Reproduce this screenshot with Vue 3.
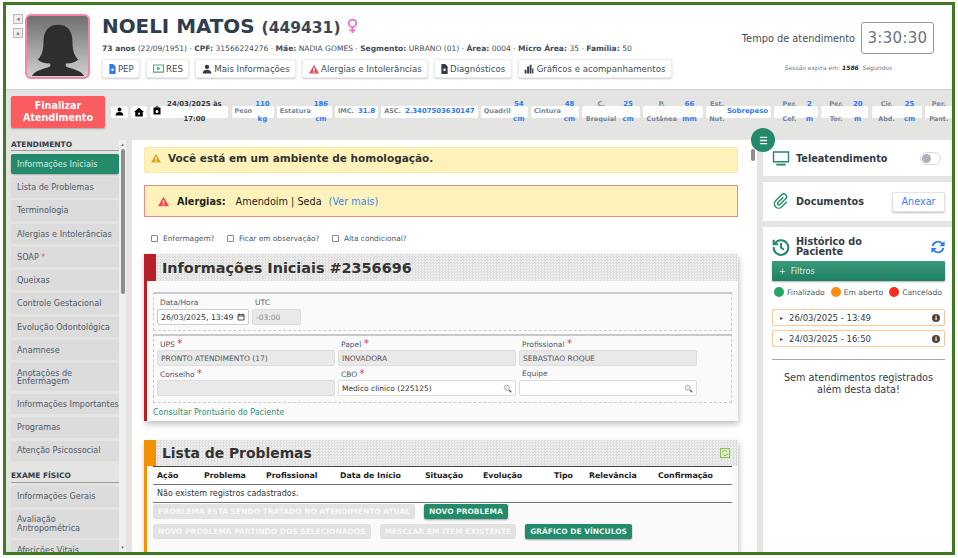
<script setup>
const acoes = [
  { nome: 'PEP', icone: 'arquivo', cor: '#2f7bf0' },
  { nome: 'RES', icone: 'res', cor: '#3fae8c' },
  { nome: 'Mais Informações', icone: 'pessoa', cor: '#333c48' },
  { nome: 'Alergias e Intolerâncias', icone: 'alerta', cor: '#ef4b55' },
  { nome: 'Diagnósticos', icone: 'arquivo', cor: '#333c48' },
  { nome: 'Gráficos e acompanhamentos', icone: 'barras', cor: '#333c48' },
]

const medidas = [
  { label: 'Peso', valor: '110 kg' },
  { label: 'Estatura', valor: '186 cm' },
  { label: 'IMC.', valor: '31.8' },
  { label: 'ASC.', valor: '2.3407503630147' },
  { label: 'Quadril', valor: '54 cm' },
  { label: 'Cintura', valor: '48 cm' },
  { label: 'C. Braquial', valor: '25 cm' },
  { label: 'P. Cutânea', valor: '66 mm' },
  { label: 'Est. Nut.', valor: 'Sobrepeso' },
  { label: 'Per. Cef.', valor: '2 m' },
  { label: 'Per. Tor.', valor: '20 m' },
  { label: 'Cir. Abd.', valor: '25 cm' },
  { label: 'Per. Pant.', valor: '' },
]

const menuAtendimento = [
  { nome: 'Informações Iniciais', ativo: true },
  { nome: 'Lista de Problemas' },
  { nome: 'Terminologia' },
  { nome: 'Alergias e Intolerâncias' },
  { nome: 'SOAP', obrigatorio: true },
  { nome: 'Queixas' },
  { nome: 'Controle Gestacional' },
  { nome: 'Evolução Odontológica' },
  { nome: 'Anamnese' },
  { nome: 'Anotações de Enfermagem', quebra: true },
  { nome: 'Informações Importantes' },
  { nome: 'Programas' },
  { nome: 'Atenção Psicossocial' },
]

const menuExame = [
  { nome: 'Informações Gerais' },
  { nome: 'Avaliação Antropométrica', quebra: true },
  { nome: 'Aferições Vitais' },
]

const colunas = ['Ação', 'Problema', 'Profissional', 'Data de Início', 'Situação', 'Evolução', 'Tipo', 'Relevância', 'Confirmação']

const historico = ['26/03/2025 - 13:49', '24/03/2025 - 16:50']
</script>

<template>
  <div class="moldura">
    <header class="topo">
      <div class="setas">
        <span class="seta">◂</span>
        <span class="seta">▴</span>
      </div>
      <div class="foto">
        <svg viewBox="0 0 62 62" width="60" height="60">
          <path fill="#2e2e2e" d="M31 8c-11 0-15 8-15 18 0 9-2 14-6 18 3 3 7 4 13 4v3c-5 3-15 3-19 10h54c-4-7-14-7-19-10v-3c6 0 10-1 13-4-4-4-6-9-6-18 0-10-4-18-15-18z" />
        </svg>
      </div>
      <div class="paciente">
        <h1 class="nome">
          <span>NOELI MATOS</span><small>(449431)</small>
          <svg class="sexo" viewBox="0 0 12 18" width="11" height="16">
            <circle cx="6" cy="6" r="4.2" fill="none" stroke="#f06fc0" stroke-width="2" />
            <path d="M6 10v7M2.5 14h7" stroke="#f06fc0" stroke-width="2" />
          </svg>
        </h1>
        <p class="dados">
          <b>73 anos</b> (22/09/1951) · <b>CPF:</b> 31566224276 · <b>Mãe:</b> NADIA GOMES · <b>Segmento:</b> URBANO (01) · <b>Área:</b> 0004 · <b>Micro Área:</b> 35 · <b>Família:</b> 50
        </p>
        <div class="acoes">
          <button v-for="a in acoes" :key="a.nome" class="acao">
            <svg v-if="a.icone === 'arquivo'" viewBox="3 0 10 16" width="7" height="10" :fill="a.cor">
              <path d="M3 0h6l4 4v12H3zM8 7a2 2 0 100 4 2 2 0 000-4z" />
            </svg>
            <svg v-else viewBox="0 0 16 16" :width="a.icone === 'res' ? 11 : 10" :height="a.icone === 'res' ? 11 : 10" :fill="a.cor">
              <path v-if="a.icone === 'res'" fill-rule="evenodd" d="M0 2h16v12H0zM1.500 3.500v9h13v-9zM6 5l5 3-5 3z" />
              <path v-else-if="a.icone === 'pessoa'" d="M8 1a3.500 3.500 0 110 7 3.500 3.500 0 010-7zM1 15c0-4 3-6 7-6s7 2 7 6z" />
              <path v-else-if="a.icone === 'alerta'" fill-rule="evenodd" d="M8 1l8 14H0zM7 6v5h2V6zM7 12v2h2v-2z" />
              <path v-else d="M1 9h3v6H1zM5 4h3v11H5zM9 1h3v14H9zM13 7h2v8h-2z" />
            </svg>
            {{ a.nome }}
          </button>
        </div>
      </div>
      <div class="tempo">
        <div class="tempo-linha">
          <span class="tempo-label">Tempo de atendimento</span>
          <span class="relogio">3:30:30</span>
        </div>
        <p class="sessao">Sessão expira em: <b>1586</b> &nbsp;Segundos</p>
      </div>
    </header>

    <section class="barra">
      <button class="finalizar">Finalizar Atendimento</button>
      <div class="chips">
        <span class="chip chip-icone">
          <svg viewBox="0 0 16 16" width="9" height="9"><path d="M8 1a3.500 3.500 0 110 7 3.500 3.500 0 010-7zM1 15c0-4 3-6 7-6s7 2 7 6z" /></svg>
        </span>
        <span class="chip chip-icone">
          <svg viewBox="0 0 16 16" width="10" height="10"><path fill-rule="evenodd" d="M8 1l8 7h-2v7H2V8H0zM6.500 9v3h3V9z" /></svg>
        </span>
        <span class="chip chip-data">
          <svg viewBox="0 0 16 16" width="8" height="9"><path fill-rule="evenodd" d="M1 2h4a3 3 0 016 0h4v14H1zM8 1.200a1 1 0 100 2 1 1 0 000-2zM8 7a3 3 0 100 6 3 3 0 000-6z" /></svg>
          <b>24/03/2025 às 17:00</b>
        </span>
        <span v-for="m in medidas" :key="m.label" class="chip">
          <span class="chip-label">{{ m.label }}</span>
          <span class="chip-valor">{{ m.valor }}</span>
        </span>
      </div>
    </section>

    <div class="corpo">
      <aside class="lateral">
        <nav class="menu">
          <h4 class="menu-titulo">ATENDIMENTO</h4>
          <a v-for="i in menuAtendimento" :key="i.nome" class="menu-item" :class="{ ativo: i.ativo, quebra: i.quebra }">
            <span>{{ i.nome }} <em v-if="i.obrigatorio">*</em></span>
          </a>
          <h4 class="menu-titulo exame">EXAME FÍSICO</h4>
          <a v-for="i in menuExame" :key="i.nome" class="menu-item" :class="{ quebra: i.quebra }">
            <span>{{ i.nome }}</span>
          </a>
        </nav>
        <div class="rolagem">
          <span class="rolagem-seta">▴</span>
          <span class="rolagem-guia"></span>
          <span class="rolagem-seta fim">▾</span>
        </div>
      </aside>

      <main class="principal">
        <div class="conteudo">
          <div class="aviso">
            <svg viewBox="0 0 16 16" width="10" height="10" fill="#d9a520"><path fill-rule="evenodd" d="M8 1l8 14H0zM7 6v5h2V6zM7 12v2h2v-2z" /></svg>
            <strong>Você está em um ambiente de homologação.</strong>
          </div>
          <div class="aviso alergia">
            <svg viewBox="0 0 16 16" width="11" height="11" fill="#ef4b55"><path fill-rule="evenodd" d="M8 1l8 14H0zM7 6v5h2V6zM7 12v2h2v-2z" /></svg>
            <b>Alergias:</b>
            <span>Amendoim | Seda</span>
            <a>(Ver mais)</a>
          </div>
          <div class="checks">
            <label><i class="caixa"></i>Enfermagem?</label>
            <label><i class="caixa"></i>Ficar em observação?</label>
            <label><i class="caixa"></i>Alta condicional?</label>
          </div>

          <section class="cartao vermelho">
            <div class="cartao-topo"><h2>Informações Iniciais #2356696</h2></div>
            <div class="cartao-corpo">
              <div class="grupo linha-data">
                <div class="campo">
                  <label>Data/Hora</label>
                  <div class="entrada data">
                    26/03/2025, 13:49
                    <svg viewBox="0 0 12 12" width="8" height="8"><path fill="none" stroke="#222" stroke-width="1.200" d="M1.500 2.500h9v8h-9zM1.500 4.500h9M3.500 1v2M8.500 1v2" /></svg>
                  </div>
                </div>
                <div class="campo">
                  <label>UTC</label>
                  <div class="entrada off utc">-03:00</div>
                </div>
              </div>
              <div class="grupo grade">
                <div class="campo"><label>UPS <em>*</em></label><div class="entrada off">PRONTO ATENDIMENTO (17)</div></div>
                <div class="campo"><label>Papel <em>*</em></label><div class="entrada off">INOVADORA</div></div>
                <div class="campo"><label>Profissional <em>*</em></label><div class="entrada off">SEBASTIAO ROQUE</div></div>
                <div class="campo"><label>Conselho <em>*</em></label><div class="entrada off"></div></div>
                <div class="campo">
                  <label>CBO <em>*</em></label>
                  <div class="entrada busca">Medico clinico (225125)
                    <svg viewBox="0 0 12 12" width="9" height="9"><circle cx="5" cy="5" r="3.500" fill="#dfeaf0" stroke="#9aa5ab" /><path d="M8 8l3 3" stroke="#555" stroke-width="1.600" /></svg>
                  </div>
                </div>
                <div class="campo">
                  <label>Equipe</label>
                  <div class="entrada busca">
                    <svg viewBox="0 0 12 12" width="9" height="9"><circle cx="5" cy="5" r="3.500" fill="#dfeaf0" stroke="#9aa5ab" /><path d="M8 8l3 3" stroke="#555" stroke-width="1.600" /></svg>
                  </div>
                </div>
              </div>
              <a class="consultar">Consultar Prontuário do Paciente</a>
            </div>
          </section>

          <section class="cartao laranja">
            <div class="cartao-topo">
              <h2>Lista de Problemas</h2>
              <svg class="recarregar" viewBox="0 0 12 12" width="10" height="10">
                <rect x="0.500" y="0.500" width="11" height="11" fill="#dcefc0" stroke="#7fb84a" />
                <path d="M3 5a3 3 0 015-1M9 7a3 3 0 01-5 1" fill="none" stroke="#6aa83a" />
              </svg>
            </div>
            <div class="cartao-corpo sem-topo">
              <table class="tabela">
                <thead>
                  <tr><th v-for="c in colunas" :key="c">{{ c }}</th></tr>
                </thead>
                <tbody>
                  <tr><td :colspan="colunas.length">Não existem registros cadastrados.</td></tr>
                </tbody>
              </table>
              <div class="botoes">
                <button class="btn" disabled>PROBLEMA ESTÁ SENDO TRATADO NO ATENDIMENTO ATUAL</button>
                <button class="btn">NOVO PROBLEMA</button>
              </div>
              <div class="botoes">
                <button class="btn" disabled>NOVO PROBLEMA PARTINDO DOS SELECIONADOS</button>
                <button class="btn" disabled>MESCLAR EM ITEM EXISTENTE</button>
                <button class="btn">GRÁFICO DE VÍNCULOS</button>
              </div>
            </div>
          </section>
        </div>
        <div class="rolagem-principal"><span></span></div>
      </main>

      <aside class="direita">
        <button class="hamburguer" aria-label="menu">
          <svg viewBox="0 0 10 10" width="9" height="9"><path d="M1 1.500h8M1 5h8M1 8.500h8" stroke="#fff" stroke-width="1.600" /></svg>
        </button>
        <div class="painel linha">
          <svg viewBox="0 0 18 16" width="18" height="15" fill="none" stroke="#238a6b" stroke-width="1.500">
            <path d="M1 1h16v10.500H1z" /><path d="M4 14.500h10" stroke-width="2" />
          </svg>
          <b>Teleatendimento</b>
          <span class="chave"><i></i></span>
        </div>
        <div class="painel linha docs">
          <svg viewBox="0 0 19 19" width="18" height="18" fill="none" stroke="#238a6b" stroke-width="1.500">
            <g transform="rotate(45 9.500 9)">
              <path d="M8 4v8a1.500 1.500 0 003 0V3.500a3 3 0 00-6 0v9a4.500 4.500 0 009 0V5" />
            </g>
          </svg>
          <b>Documentos</b>
          <button class="anexar">Anexar</button>
        </div>
        <div class="painel historico">
          <div class="hist-topo">
            <svg viewBox="0 0 16 16" width="18" height="18" fill="none" stroke="#238a6b" stroke-width="1.800">
              <path d="M2.500 5A6.500 6.500 0 111.500 8" /><path d="M1.500 1.500V5.500h4" /><path d="M8 4.500V8.500l2.500 2" />
            </svg>
            <b>Histórico do Paciente</b>
            <svg viewBox="0 0 16 16" width="14" height="14" fill="none" stroke="#2f7bf0" stroke-width="2.200">
              <path d="M2 7a6 6 0 0110.500-3L14 5.500" /><path d="M14 9a6 6 0 01-10.500 3L2 10.500" />
              <path d="M15.500 1v6h-6zM.5 15V9h6z" stroke="none" fill="#2f7bf0" />
            </svg>
          </div>
          <button class="filtros">+ &nbsp;Filtros</button>
          <div class="legenda">
            <span><i class="verde"></i>Finalizado</span>
            <span><i class="ambar"></i>Em aberto</span>
            <span><i class="rubro"></i>Cancelado</span>
          </div>
          <div v-for="h in historico" :key="h" class="hist-item">
            <span class="hist-seta">▸</span>
            {{ h }}
            <span class="hist-info">i</span>
          </div>
          <hr class="regua" />
          <p class="vazio">Sem atendimentos registrados além desta data!</p>
        </div>
      </aside>
    </div>
  </div>
</template>

<style>
html, body {
  margin: 0;
  background: #fff;
}
</style>

<style scoped>
* {
  box-sizing: border-box;
}

.moldura {
  width: 952px;
  height: 553px;
  margin: 2px 0 0 3px;
  border: 3px solid #3f7a22;
  display: flex;
  flex-direction: column;
  overflow: hidden;
  background: #e4e4e2;
  font-family: "DejaVu Sans", Verdana, sans-serif;
  color: #333c48;
}

button {
  font-family: inherit;
}

/* topo */
.topo {
  height: 85px;
  flex: none;
  display: flex;
  background: #fff;
  border-bottom: 1px solid #cfd0d6;
  padding: 9px 0 0 7px;
}

.setas {
  display: flex;
  flex-direction: column;
  gap: 4px;
  width: 12px;
}

.seta {
  width: 10px;
  height: 10px;
  border: 1px solid #bbb;
  background: #eee;
  color: #888;
  font-size: 7px;
  line-height: 8px;
  text-align: center;
}

.foto {
  width: 65px;
  height: 65px;
  border: 2.500px solid #f783ac;
  border-radius: 6px;
  background: linear-gradient(#6f6f6f, #cfcfcf);
  overflow: hidden;
  display: flex;
  align-items: flex-end;
  justify-content: center;
}

.paciente {
  margin-left: 12px;
  width: 540px;
  flex: none;
}

.nome {
  margin: 0;
  font-size: 19.900px;
  line-height: 26px;
  font-weight: 700;
  color: #2f3d4e;
  white-space: nowrap;
}

.nome small {
  margin-left: 7px;
  font-size: 15.500px;
  color: #3c4654;
}

.sexo {
  margin-left: 7px;
  vertical-align: -1px;
}

.dados {
  margin: 2px 0 0;
  font-size: 7.550px;
  line-height: 11px;
  white-space: nowrap;
  color: #444d59;
}

.acoes {
  display: flex;
  gap: 6px;
  margin-top: 5px;
}

.acao {
  height: 19px;
  padding: 0 5.500px;
  background: #fff;
  border: 1px solid #ececec;
  border-radius: 2px;
  box-shadow: 0 1px 2px rgba(0, 0, 0, 0.2);
  font-size: 8.600px;
  color: #444d59;
  white-space: nowrap;
  display: flex;
  align-items: center;
  gap: 2.400px;
}

.tempo {
  margin-left: auto;
  width: 209px;
  padding: 8px 18px 0 0;
  flex: none;
}

.tempo-linha {
  display: flex;
  align-items: center;
  justify-content: flex-end;
  gap: 6px;
}

.tempo-label {
  font-size: 9.800px;
  color: #444d59;
  white-space: nowrap;
}

.relogio {
  width: 73px;
  height: 32px;
  flex: none;
  border: 1px solid #999;
  border-radius: 3px;
  font-size: 15px;
  letter-spacing: 0.3px;
  line-height: 30px;
  text-align: center;
  color: #6b7480;
}

.sessao {
  margin: 10px 0 0;
  text-align: center;
  font-size: 6px;
  font-style: italic;
  color: #6b7480;
  white-space: nowrap;
}

.sessao b {
  color: #222;
}

/* barra de medidas */
.barra {
  height: 50px;
  flex: none;
  display: flex;
  gap: 6px;
  padding: 6px 0 0 5px;
  overflow: hidden;
}

.finalizar {
  width: 94px;
  height: 32px;
  flex: none;
  border: none;
  border-radius: 2px;
  background: #fb5c5f;
  box-shadow: 0 1px 2px rgba(0, 0, 0, 0.3);
  color: #fff;
  font-size: 9.600px;
  font-weight: 700;
  line-height: 12px;
  padding: 0 4px;
}

.chips {
  display: grid;
  grid-template-columns: 17px 16px 78px 42px 55px 43px 96.500px 47px 48px 58px 59.500px 65px 44px 47px 50px 30px;
  gap: 3.200px;
  align-items: center;
  height: 31px;
  font-size: 6.900px;
  font-weight: 700;
}

.chip {
  height: 12px;
  background: #fff;
  border-radius: 2px;
  padding: 0 3px;
  display: flex;
  align-items: center;
  justify-content: space-between;
  gap: 2px;
  line-height: 15px;
  text-align: center;
}

.chip-icone {
  justify-content: center;
  padding: 0;
}

.chip-data b {
  flex: 1;
  color: #333c48;
}

.chip-data svg {
  flex: none;
  margin-bottom: 2px;
}

.chip-label {
  color: #7c8794;
  font-size: 6.500px;
}

.chip-valor {
  color: #2f7bf0;
}

/* corpo */
.corpo {
  flex: 1;
  min-height: 0;
  display: flex;
}

.lateral {
  width: 120px;
  flex: none;
  display: flex;
}

.menu {
  width: 113px;
  flex: none;
  padding-left: 5px;
  overflow: hidden;
}

.menu-titulo {
  margin: 0 0 3px;
  height: 11px;
  font-size: 7.500px;
  line-height: 9px;
  font-weight: 700;
  color: #333c48;
  border-bottom: 1px solid #9a9da3;
}

.menu-titulo.exame {
  margin: 9px 0 3.500px;
  height: 13px;
  line-height: 12px;
}

.menu-item {
  display: flex;
  align-items: center;
  min-height: 20.300px;
  margin-bottom: 2.950px;
  padding-left: 6px;
  background: #dcdcdc;
  border-radius: 2px;
  font-size: 8.100px;
  line-height: 8.500px;
  color: #4d5866;
  white-space: nowrap;
}

.menu-item.quebra {
  white-space: normal;
  min-height: 28px;
}

.menu-item.quebra span {
  max-width: 80px;
}

.menu-item em {
  color: #ee5a6a;
  font-style: normal;
}

.menu-item.ativo {
  background: #238a6b;
  color: #d9efe7;
  box-shadow: 0 1px 2px rgba(0, 0, 0, 0.25);
}

.rolagem {
  width: 7px;
  flex: none;
  display: flex;
  flex-direction: column;
  background: #efefef;
  color: #666;
  font-size: 5px;
  text-align: center;
}

.rolagem-seta {
  height: 9px;
  line-height: 9px;
}

.rolagem-seta.fim {
  margin-top: auto;
}

.rolagem-guia {
  height: 145px;
  width: 4px;
  margin-left: 1.500px;
  background: #8d8d8d;
  border-radius: 2px;
}

.principal {
  width: 625px;
  margin-left: 6px;
  flex: none;
  display: flex;
  background: #fff;
}

.conteudo {
  width: 619px;
  flex: none;
  padding: 7px 13px 0 12px;
  overflow: hidden;
}

.rolagem-principal {
  width: 6px;
  flex: none;
  padding: 9px 0 0 0;
}

.rolagem-principal span {
  display: block;
  width: 4px;
  height: 12px;
  background: #8d8d8d;
  border-radius: 2px;
}

.aviso {
  height: 26px;
  display: flex;
  align-items: center;
  gap: 7px;
  padding: 0 0 4px 6px;
  background: #fff3bb;
  border: 1px solid #f6eaa0;
  border-radius: 2px;
  font-size: 10.500px;
  color: #333;
}

.aviso.alergia {
  height: 32px;
  margin-top: 12px;
  padding: 0 0 0 13px;
  gap: 8px;
  border: 1px solid #f08a85;
  border-radius: 0;
  font-size: 9.700px;
  color: #222;
}

.alergia b {
  margin-right: 2px;
}

.alergia a {
  color: #3d86f0;
  margin-left: -1px;
}

.checks {
  display: flex;
  gap: 12.500px;
  padding: 16px 0 0 7px;
  height: 37px;
  font-size: 7.400px;
  color: #4d5866;
}

.checks label {
  display: flex;
  align-items: center;
  height: 10px;
  gap: 5px;
}

.caixa {
  width: 7px;
  height: 7px;
  border: 1px solid #888;
  border-radius: 1px;
  background: #fff;
}

.cartao {
  background: #fafafa;
  box-shadow: 1px 3px 6px rgba(0, 0, 0, 0.25);
  border-left: 3px solid;
}

.cartao.vermelho {
  border-color: #b91f26;
}

.cartao.laranja {
  border-color: #f39200;
  margin-top: 19px;
  height: 130px;
}

.cartao-topo {
  height: 27px;
  margin-left: -3px;
  display: flex;
  align-items: center;
  justify-content: space-between;
  background: repeating-conic-gradient(#dedede 0 25%, #f0f0f0 0 50%) 0 0 / 3px 3px;
  border-left: 12px solid;
  border-left-color: inherit;
  padding-left: 6px;
}

.cartao-topo h2 {
  margin: 0;
  font-size: 14.400px;
  font-weight: 700;
  color: #333;
  white-space: nowrap;
}

.laranja .cartao-topo {
  height: 26px;
}

.laranja .cartao-topo h2 {
  font-size: 13.900px;
}

.recarregar {
  margin-right: 8px;
}

.cartao-corpo {
  padding: 11px 6px 0 6px;
  height: 140px;
}

.cartao-corpo.sem-topo {
  padding-top: 0;
  height: auto;
}

.grupo {
  border-top: 2px solid #c9c9c9;
  border-left: 1px dashed #ccc;
  border-right: 1px dashed #ccc;
  border-bottom: 1px dashed #ccc;
  font-size: 7.500px;
  color: #4d5866;
}

.linha-data {
  height: 39px;
  display: flex;
  gap: 3px;
  padding: 3px 0 0 3px;
}

.grade {
  height: 69px;
  margin-top: 3px;
  display: grid;
  grid-template-columns: 178px 178px 178px;
  align-content: start;
  gap: 2px 3px;
  padding: 2px 0 0 3px;
}

.campo label {
  display: block;
  height: 12px;
  font-size: 7.500px;
  line-height: 11px;
  padding-left: 3px;
}

.campo em {
  color: #e8333f;
  font-style: normal;
  font-size: 10px;
}

.entrada {
  height: 16px;
  padding: 0 3px;
  border: 1px solid #ddd;
  border-radius: 2px;
  background: #fff;
  display: flex;
  align-items: center;
  justify-content: space-between;
  font-size: 7.500px;
  color: #333;
  white-space: nowrap;
}

.entrada.busca svg {
  margin-left: auto;
}

.entrada.off {
  background: #e9e9e9;
  color: #555;
}

.entrada.data {
  width: 92px;
  border-color: #ccc;
  font-size: 7.800px;
}

.entrada.utc {
  width: 49px;
  color: #8a8a8a;
}

.consultar {
  display: block;
  margin-top: 5px;
  font-size: 8px;
  color: #2a9478;
}

.tabela {
  width: 100%;
  table-layout: fixed;
  border-collapse: collapse;
  border-top: 1px solid #444;
  background: #fff;
  font-size: 7.800px;
  color: #222;
}

.tabela th {
  height: 18px;
  text-align: left;
  border-bottom: 1px solid #777;
  padding: 0 0 0 4px;
  white-space: nowrap;
}

.tabela th:nth-child(1) { width: 47px; }
.tabela th:nth-child(2) { width: 62px; }
.tabela th:nth-child(3) { width: 74px; }
.tabela th:nth-child(4) { width: 85px; }
.tabela th:nth-child(5) { width: 58px; }
.tabela th:nth-child(6) { width: 71px; }
.tabela th:nth-child(7) { width: 35px; }
.tabela th:nth-child(8) { width: 69px; }

.tabela td {
  height: 18px;
  padding: 0 4px;
  border-bottom: 1px solid #777;
  font-size: 8px;
  color: #333;
}

.botoes {
  display: flex;
  gap: 9px;
  margin-bottom: 5px;
}

.botoes:first-of-type {
  margin-top: 1px;
}

.btn {
  height: 15px;
  border: none;
  border-radius: 2px;
  padding: 0 5px;
  background: #238a6b;
  color: #e6f5ef;
  box-shadow: 0 1px 2px rgba(0, 0, 0, 0.35);
  font-size: 7.500px;
  font-weight: 700;
  white-space: nowrap;
}

.btn:disabled {
  background: #e2e2e2;
  color: #f7f7f7;
  box-shadow: none;
}

/* coluna direita */
.direita {
  position: relative;
  width: 189px;
  flex: none;
  margin-left: 6px;
  display: flex;
  flex-direction: column;
  gap: 6px;
}

.hamburguer {
  position: absolute;
  left: -12px;
  top: -12px;
  width: 24px;
  height: 24px;
  border: none;
  border-radius: 50%;
  background: #238a6b;
  display: flex;
  align-items: center;
  justify-content: center;
  padding: 0;
}

.painel {
  background: #fff;
  font-size: 9.700px;
  color: #333c48;
}

.linha {
  height: 36px;
  display: flex;
  align-items: center;
  gap: 6px;
  padding: 0 7px 0 9px;
}

.docs {
  height: 39px;
}

.chave {
  margin-left: auto;
  margin-right: 4px;
  width: 21px;
  height: 13px;
  border: 1px solid #d6d8dc;
  border-radius: 7px;
  padding: 1px;
}

.chave i {
  display: block;
  width: 9px;
  height: 9px;
  border-radius: 50%;
  background: #aeb2ba;
}

.anexar {
  margin-left: auto;
  width: 53px;
  height: 20px;
  border: 1px solid #e4e4e4;
  border-radius: 2px;
  background: #fff;
  box-shadow: 0 1px 2px rgba(0, 0, 0, 0.25);
  color: #3d7ff0;
  font-size: 9.700px;
  padding: 0;
}

.historico {
  flex: 1;
  padding: 9px 7px 0 9px;
}

.hist-topo {
  display: flex;
  align-items: center;
  gap: 6px;
  line-height: 10.500px;
  height: 22px;
  margin-bottom: 3px;
}

.hist-topo b {
  width: 100px;
}

.hist-topo svg:last-child {
  margin-left: auto;
}

.filtros {
  display: block;
  width: 100%;
  height: 20px;
  border: none;
  border-radius: 1px;
  background: linear-gradient(#3a9a7c, #1f7f62);
  box-shadow: 0 1px 2px rgba(0, 0, 0, 0.3);
  color: #d9efe7;
  font-size: 8px;
  text-align: left;
  padding-left: 7px;
}

.legenda {
  display: flex;
  justify-content: space-between;
  margin: 5px 3px 0 2px;
  height: 12px;
  font-size: 7.600px;
  color: #4d5866;
}

.legenda span {
  display: flex;
  align-items: center;
  gap: 3px;
}

.legenda i {
  width: 10px;
  height: 10px;
  border-radius: 50%;
}

.verde { background: #25a55f; }
.ambar { background: #fb8c0f; }
.rubro { background: #fb2b1d; }

.hist-item {
  height: 17px;
  margin-top: 4px;
  display: flex;
  align-items: center;
  gap: 6px;
  padding: 0 4px 0 7px;
  border: 1px solid #f9c79c;
  border-radius: 2px;
  font-size: 8.500px;
  color: #333c48;
}

.legenda + .hist-item {
  margin-top: 11px;
}

.hist-seta {
  font-size: 6px;
}

.hist-info {
  margin-left: auto;
  width: 8px;
  height: 8px;
  border-radius: 50%;
  background: #444;
  color: #fff;
  font-size: 6px;
  line-height: 8px;
  text-align: center;
  font-weight: 700;
}

.regua {
  border: none;
  border-top: 1px solid #aaa;
  margin: 12px 0 0;
}

.vazio {
  margin: 12px 0 0;
  padding: 0 8px;
  text-align: center;
  font-size: 9.700px;
  line-height: 12px;
  color: #333c48;
}
</style>
